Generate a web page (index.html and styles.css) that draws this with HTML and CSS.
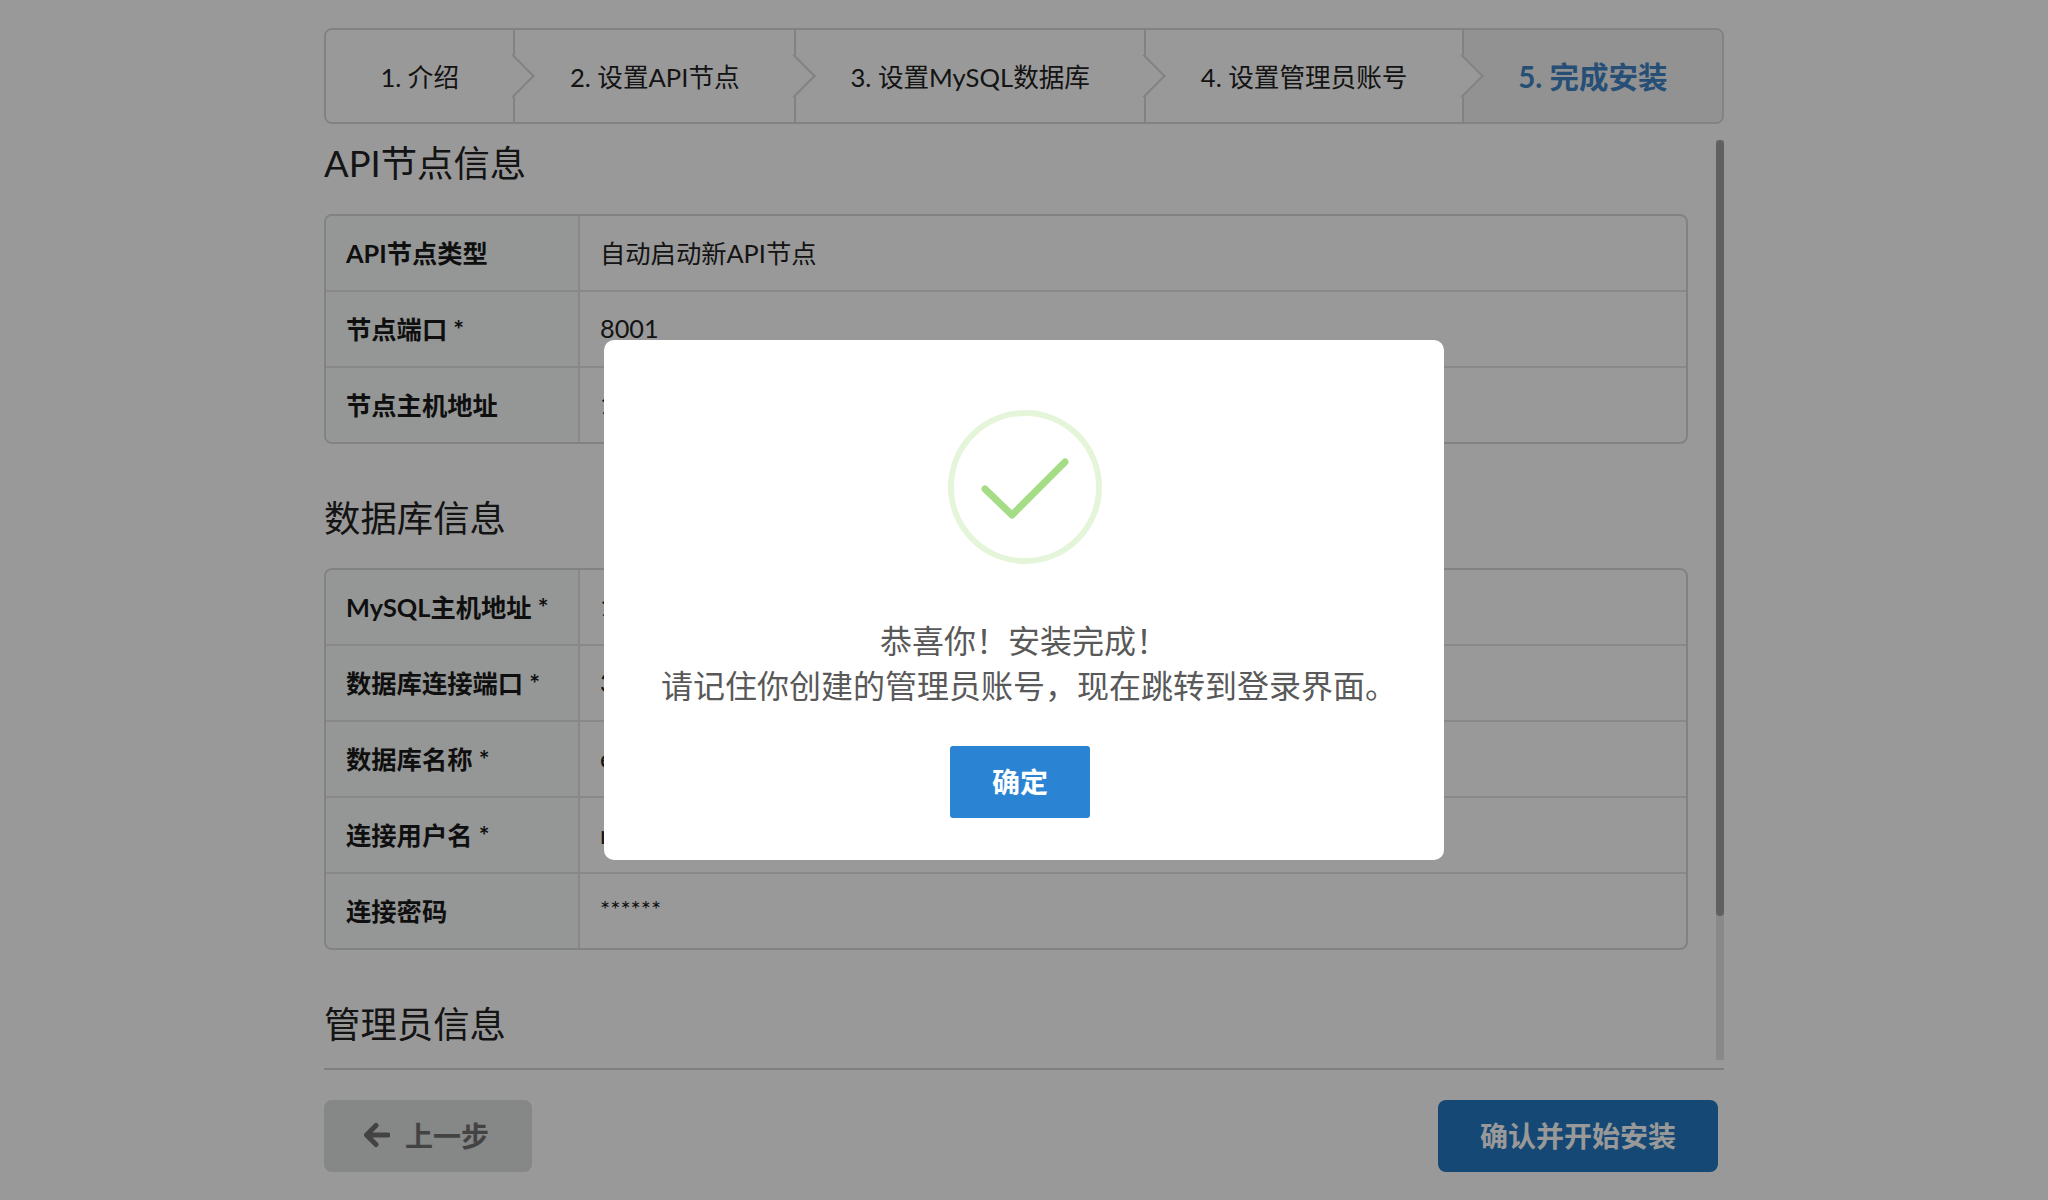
FILE: index.html

```html
<!DOCTYPE html>
<html lang="zh-CN">
<head>
  <meta charset="UTF-8">
  <meta name="viewport" content="width=device-width, initial-scale=1.0">
  <title>安装向导</title>
  <link rel="stylesheet" href="styles.css">
</head>
<body>
  <div class="page">
    <div class="steps">
      <div class="step">1. 介绍</div>
      <div class="step">2. 设置API节点</div>
      <div class="step">3. 设置MySQL数据库</div>
      <div class="step">4. 设置管理员账号</div>
      <div class="step active">5. 完成安装</div>
    </div>

    <div class="content-wrap">
      <div class="content">
        <h2>API节点信息</h2>
        <div class="info-table">
          <div class="row"><div class="label">API节点类型</div><div class="value">自动启动新API节点</div></div>
          <div class="row"><div class="label">节点端口 *</div><div class="value">8001</div></div>
          <div class="row"><div class="label">节点主机地址</div><div class="value">127.0.0.1</div></div>
        </div>

        <h2>数据库信息</h2>
        <div class="info-table">
          <div class="row"><div class="label">MySQL主机地址 *</div><div class="value">127.0.0.1</div></div>
          <div class="row"><div class="label">数据库连接端口 *</div><div class="value">3306</div></div>
          <div class="row"><div class="label">数据库名称 *</div><div class="value">eoapi</div></div>
          <div class="row"><div class="label">连接用户名 *</div><div class="value">root</div></div>
          <div class="row"><div class="label">连接密码</div><div class="value value-mask">******</div></div>
        </div>

        <h2>管理员信息</h2>
      </div>
      <div class="scrollbar"><div class="scrollbar-thumb"></div></div>
    </div>

    <div class="actions">
      <button class="btn btn-back">
        <svg class="arrow" width="26" height="26" viewBox="0 0 26 26">
          <path d="M12 3.5 L2.5 13 L12 22.5 M3 13 H24" fill="none" stroke="currentColor" stroke-width="5" stroke-linecap="round" stroke-linejoin="round"/>
        </svg>
        上一步
      </button>
      <button class="btn btn-primary">确认并开始安装</button>
    </div>
  </div>

  <div class="overlay">
    <div class="modal">
      <svg class="success-icon" width="154" height="154" viewBox="0 0 154 154">
        <circle cx="77" cy="77" r="74" fill="none" stroke="#e4f5da" stroke-width="6"/>
        <path d="M37 79 L64 105 L117 52" fill="none" stroke="#a5dc86" stroke-width="7" stroke-linecap="round" stroke-linejoin="round"/>
      </svg>
      <div class="modal-text">
        <div>恭喜你！安装完成！</div>
        <div class="modal-note">请记住你创建的管理员账号，现在跳转到登录界面。</div>
      </div>
      <button class="modal-ok">确定</button>
    </div>
  </div>
</body>
</html>
```

FILE: styles.css

```css
* {
  box-sizing: border-box;
}
body {
  margin: 0;
  background-color: #fff;
  color: #222;
  font-family: Lato, "Noto Sans CJK SC", sans-serif;
  font-size: 25.3px;
}
.page {
  width: 1400px;
  margin: 0 auto;
  padding-top: 28px;
}

/* wizard steps */
.steps {
  display: flex;
  height: 96px;
  border: 2px solid #d9d9da;
  border-radius: 8px;
  overflow: hidden;
}
.step {
  position: relative;
  display: flex;
  flex: 1 1 auto;
  align-items: center;
  justify-content: center;
  padding: 0 54px 2px;
  border-right: 2px solid #d9d9da;
  background-color: #fff;
  font-size: 25.6px;
  white-space: nowrap;
}
.step::after {
  content: "";
  position: absolute;
  z-index: 1;
  top: 50%;
  right: 0;
  width: 29px;
  height: 29px;
  border-top: 2px solid #d9d9da;
  border-right: 2px solid #d9d9da;
  background-color: #fff;
  transform: translate(50%, -50%) rotate(45deg);
}
.step.active {
  border-right: 0;
  background-color: #f3f4f5;
  color: #4183c4;
  font-size: 29.5px;
  font-weight: 700;
}
.step.active::after {
  display: none;
}

/* scrolling summary */
.content-wrap {
  position: relative;
  height: 920px;
  margin: 16px 0 8px;
}
.content {
  height: 100%;
  padding-right: 36px;
  overflow: hidden;
}
.scrollbar {
  position: absolute;
  top: 0;
  right: 0;
  bottom: 0;
  width: 8px;
  background-color: rgba(0, 0, 0, 0.1);
}
.scrollbar-thumb {
  height: 776px;
  border-radius: 4px;
  background-color: rgba(0, 0, 0, 0.3);
}
h2 {
  margin: 51px 0 27px;
  font-size: 36.4px;
  font-weight: 400;
  line-height: 46px;
}
h2:first-child {
  margin: 0 0 28px;
}
.info-table {
  border: 2px solid #d9d9da;
  border-radius: 8px;
  overflow: hidden;
}
.row {
  display: flex;
  height: 76px;
  border-top: 2px solid #e3e3e4;
}
.row:first-child {
  height: 74px;
  border-top: 0;
}
.label {
  display: flex;
  flex: 0 0 254px;
  align-items: center;
  padding: 0 0 2px 20px;
  border-right: 2px solid #e3e3e4;
  background-color: #f9fafb;
  color: #1a1a1a;
  font-weight: 700;
}
.value {
  display: flex;
  flex: 1;
  align-items: center;
  padding: 0 0 2px 20px;
}
.value-mask {
  padding-bottom: 5px;
  font-size: 24px;
}

/* bottom buttons */
.actions {
  display: flex;
  justify-content: space-between;
  padding: 30px 6px 0 0;
  border-top: 2px solid #d4d4d5;
}
.btn {
  display: flex;
  align-items: center;
  height: 72px;
  border: 0;
  border-radius: 8px;
  font-family: inherit;
  font-size: 28px;
  font-weight: 700;
}
.btn-back {
  width: 208px;
  padding: 0 0 2px 40px;
  background-color: #e0e1e2;
  color: #707070;
}
.arrow {
  margin-right: 15px;
}
.btn-primary {
  padding: 0 42px 2px;
  background-color: #2379c1;
  color: #fff;
}

/* success dialog */
.overlay {
  position: fixed;
  top: 0;
  right: 0;
  bottom: 0;
  left: 0;
  z-index: 10;
  display: flex;
  align-items: center;
  justify-content: center;
  background-color: rgba(0, 0, 0, 0.4);
}
.modal {
  display: flex;
  flex-direction: column;
  align-items: center;
  width: 840px;
  height: 520px;
  padding-top: 70px;
  border-radius: 10px;
  background-color: #fff;
}
.success-icon {
  margin-left: 2px;
}
.modal-text {
  margin-top: 54px;
  color: #595959;
  font-size: 32px;
  line-height: 45px;
  text-align: center;
}
.modal-note {
  margin-left: 10px;
}
.modal-ok {
  width: 140px;
  height: 72px;
  margin: 38px 8px 0 0;
  padding-bottom: 4px;
  border: 0;
  border-radius: 3px;
  background-color: #2b84d3;
  color: #fff;
  font-family: inherit;
  font-size: 28px;
  font-weight: 700;
}
```
